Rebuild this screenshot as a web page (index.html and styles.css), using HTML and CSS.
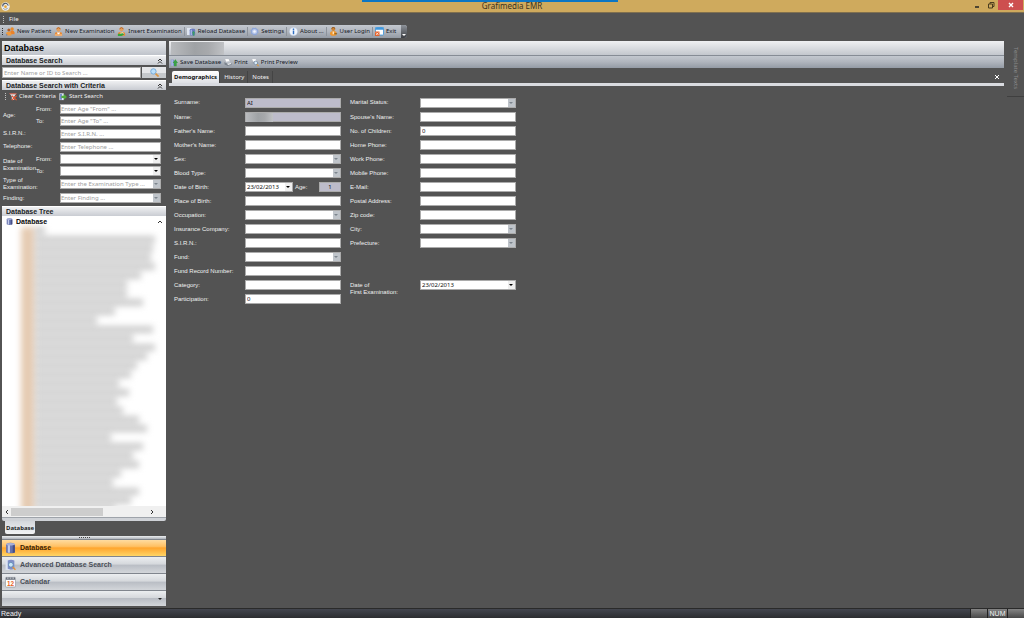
FILE: index.html
```html
<!DOCTYPE html>
<html lang="en">
<head>
	<meta charset="utf-8">
	<title>Grafimedia EMR</title>
	<link rel="stylesheet" href="styles.css">
</head>
<body>
	<!-- Icon sprite -->
	<svg class="sprite" aria-hidden="true">
		<symbol id="i-app" viewBox="0 0 10 10"><circle cx="5" cy="5" r="4.7" fill="#eef0f2"/><path d="M2 5a3 3 0 0 1 6-1" fill="none" stroke="#4d5560" stroke-width="1.2"/><path d="M2.5 7a3 3 0 0 0 5-.5" fill="none" stroke="#8d949c"/><circle cx="5" cy="5.2" r="1.5" fill="#e8a431"/></symbol>
		<symbol id="i-patients" viewBox="0 0 10 10"><circle cx="6.8" cy="2.3" r="1.9" fill="#e88a2a"/><path d="M4.5 8V6q0-2 2.3-2T9.5 6v2z" fill="#e9822b"/><circle cx="3.2" cy="3.4" r="1.7" fill="#b2602a"/><path d="M0 9.5V7.500q0-2.200 3-2.200t3 2.200v2z" fill="#f09a3a"/><path d="M0 8h1.500v1.500H0z" fill="#6482c8"/></symbol>
		<symbol id="i-exam" viewBox="0 0 10 10"><circle cx="5" cy="2.700" r="2.300" fill="#e3a05d"/><path d="M2.800 2q2-2.500 4.400 0" stroke="#b05c1e" fill="none"/><path d="M1 9.700V8q0-2.700 4-2.700T9 8v1.700z" fill="#e98a34"/><path d="M3 6l2 3 2-3z" fill="#fff"/><path d="M1 8h8v1.700H1z" fill="#f3b77c"/></symbol>
		<symbol id="i-insert" viewBox="0 0 10 10"><circle cx="5" cy="2.500" r="2.200" fill="#e3a05d"/><path d="M2.800 2q2-2.500 4.400 0" stroke="#b05c1e" fill="none"/><path d="M1 9.700V8q0-2.700 4-2.700T9 8v1.700z" fill="#e98a34"/><path d="M4 6h3v2H4z" fill="#fff"/><path d="M1 7.500h4V6.200L8 8.200 5 10H1z" fill="#35a63c"/></symbol>
		<symbol id="i-reload" viewBox="0 0 10 10"><path d="M0 1h5v8H0z" fill="#dfe6f1"/><rect x="3" y="2" width="6" height="7.500" rx="1.500" fill="#6a7cc0"/><path d="M4 3h1.500v6H4z" fill="#a9b9e6"/><path d="M6.500 9.700V7H5.300l2-2.800 2 2.800H8.200v2.700z" fill="#3d9b6a"/></symbol>
		<symbol id="i-gear" viewBox="0 0 10 10"><circle cx="5" cy="5" r="3.800" fill="#8ea6d8" stroke="#8ea6d8" stroke-width="1.600" stroke-dasharray="1.500 1.480"/><circle cx="5" cy="5" r="2.800" fill="#b9c8ea"/><circle cx="5" cy="5" r="1.400" fill="#eff3fb"/></symbol>
		<symbol id="i-info" viewBox="0 0 10 10"><circle cx="5" cy="5" r="4.600" fill="#f3f7fc" stroke="#a5b8d6" stroke-width=".5"/><path d="M4.200 1.800h1.600v1.500H4.200zM4.200 4h1.600v4H4.200z" fill="#2f6fc4"/></symbol>
		<symbol id="i-login" viewBox="0 0 10 10"><circle cx="4.800" cy="2.300" r="2.200" fill="#d08534"/><path d="M2.800 1.600q2-2.500 4 0" stroke="#7b4a1e" fill="none"/><path d="M1 8q0-3.500 4-3.500T8.500 8L7 9.800H3z" fill="#f0962c"/><path d="M4 5h1.600v3H4z" fill="#fbe3bd"/><path d="M6 7h3v1H6z" fill="#7a5a22"/></symbol>
		<symbol id="i-exit" viewBox="0 0 10 10"><rect x=".5" y=".5" width="9" height="8.500" rx="1" fill="#fff" stroke="#3f97dc"/><path d="M.500.500h9V3h-9z" fill="#3f97dc"/><path d="M0 5h5v5H0z" fill="#e5632b"/><path d="M1.200 6.200l2.600 2.600M3.800 6.200L1.200 8.800" stroke="#fff" stroke-width=".8"/></symbol>
		<symbol id="i-save" viewBox="0 0 10 10"><path d="M1 1.500h4v7.500H1z" fill="#7f93cd"/><path d="M2 2h1.200v7H2z" fill="#ccd6f0"/><path d="M5 9.700V5.500H3.400L6.700 1 10 5.500H8.300v4.200z" fill="#3aa047"/></symbol>
		<symbol id="i-print" viewBox="0 0 10 10"><path d="M1.500.500L6 1l1 3-4 1z" fill="#fff"/><path d="M.500 4.500L6 3.500l3.500 2v2.500L4.500 9.500l-4-2z" fill="#b9bfc7"/><path d="M.500 4.500l4 2 5-1v2.500l-5 1.500-4-2z" fill="#7b838d"/><path d="M4 6.500l4.500-1L9 7l-4 1.200z" fill="#eef0f3"/></symbol>
		<symbol id="i-preview" viewBox="0 0 10 10"><path d="M1.500.500L6 1l1 3-4 1z" fill="#fff"/><path d="M.500 4.500L6 3.500l3.500 2v2L4.500 9.500l-4-2z" fill="#a3aab4"/><circle cx="6" cy="5.500" r="2.300" fill="#d9ebf8" stroke="#75879d"/><path d="M7.500 7.300L9.500 9.500" stroke="#e39a35" stroke-width="1.300"/></symbol>
		<symbol id="i-lens" viewBox="0 0 10 10"><circle cx="3.800" cy="3.800" r="3" fill="#b9defa" stroke="#6ea5d6"/><path d="M6.200 6.200L9.500 9.500" stroke="#d99442" stroke-width="1.800"/></symbol>
		<symbol id="i-clear" viewBox="0 0 10 10"><path d="M.500 1h9L6.500 5v4.500h-3V5z" fill="#e3e6ea"/><path d="M.500 1h9v1.200h-9z" fill="#b33c26"/><path d="M3.500 4l6 5.500M9.500 4l-6 5.500" stroke="#e2532f" stroke-width="1.500"/></symbol>
		<symbol id="i-start" viewBox="0 0 10 10"><path d="M.500 1h5.500v8.500H.500z" fill="#dfe6f5"/><path d="M1.500 2h2v7h-2z" fill="#5e77bd"/><path d="M3 4h3V1.800L10 5.500 6 9V7H3z" fill="#53ae3c"/></symbol>
		<symbol id="i-db" viewBox="0 0 10 10"><path d="M1 1.500q4-2.500 8 0v7.500q-4 1.700-8 0z" fill="#6672ad"/><path d="M2.500 1.800h2v7.500h-2z" fill="#c3cbea"/><ellipse cx="5" cy="1.600" rx="4" ry="1.200" fill="#a6afd7"/><path d="M7 2.500h2v6.500l-2 .600z" fill="#474f86"/></symbol>
		<symbol id="i-dbsearch" viewBox="0 0 10 10"><path d="M.500.500h4v9h-4z" fill="#dce3f1"/><path d="M2.500 1q3-1.500 6 0v7.500q-3 1.300-6 0z" fill="#7f8fc6"/><circle cx="5.300" cy="4.800" r="2.200" fill="#c9e6f6" stroke="#5e86b4" stroke-width=".8"/><path d="M7 6.800L9.500 9.300" stroke="#e2953a" stroke-width="1.300"/></symbol>
	</svg>

	<header class="titlebar">
		<svg class="icon"><use href="#i-app"/></svg>
		<h1>Grafimedia EMR</h1>
		<span class="accent"></span>
		<div class="winbtns">
			<button class="win" aria-label="Minimize"><svg viewBox="0 0 8 8"><path d="M2 6h4" stroke="#222" stroke-width="1.500"/></svg></button>
			<button class="win" aria-label="Restore"><svg viewBox="0 0 8 8"><path d="M1.500 3h4v4h-4zM3 3V1.500h4v4H5.500" fill="none" stroke="#4b3d1e"/></svg></button>
			<button class="win win-close" aria-label="Close"><svg viewBox="0 0 8 8"><path d="M2 2l4 4M6 2L2 6" stroke="#fff" stroke-width="1.400"/></svg></button>
		</div>
	</header>

	<nav class="menubar"><span class="grip"></span><button class="menu">File</button></nav>

	<div class="toolbar main-toolbar">
		<span class="grip dark"></span>
		<button class="tool"><svg class="icon"><use href="#i-patients"/></svg>New Patient</button>
		<button class="tool"><svg class="icon"><use href="#i-exam"/></svg>New Examination</button>
		<button class="tool"><svg class="icon"><use href="#i-insert"/></svg>Insert Examination</button>
		<span class="sep"></span>
		<button class="tool"><svg class="icon"><use href="#i-reload"/></svg>Reload Database</button>
		<span class="sep"></span>
		<button class="tool"><svg class="icon"><use href="#i-gear"/></svg>Settings</button>
		<span class="sep"></span>
		<button class="tool"><svg class="icon"><use href="#i-info"/></svg>About ...</button>
		<span class="sep"></span>
		<button class="tool"><svg class="icon"><use href="#i-login"/></svg>User Login</button>
		<span class="sep"></span>
		<button class="tool"><svg class="icon"><use href="#i-exit"/></svg>Exit</button>
		<button class="overflow" aria-label="Toolbar options"></button>
	</div>

	<div class="workspace">
		<aside class="sidebar">
			<h2 class="pane-title">Database</h2>
			<h3 class="section">Database Search <svg viewBox="0 0 6 6"><path d="M1 3l2-2 2 2M1 5.500l2-2 2 2"/></svg></h3>
			<div class="quick">
				<input type="text" aria-label="Search" placeholder="Enter Name or ID to Search ...">
				<button aria-label="Search"><svg class="icon"><use href="#i-lens"/></svg></button>
			</div>
			<h3 class="section">Database Search with Criteria <svg viewBox="0 0 6 6"><path d="M1 3l2-2 2 2M1 5.500l2-2 2 2"/></svg></h3>
			<div class="criteria-tools">
				<span class="grip"></span>
				<button class="tool light"><svg class="icon"><use href="#i-clear"/></svg>Clear Criteria</button>
				<button class="tool light"><svg class="icon"><use href="#i-start"/></svg>Start Search</button>
			</div>
			<div class="criteria">
				<span class="pair">Age:</span>
				<label for="age-from">From:</label><input type="text" id="age-from" placeholder="Enter Age &quot;From&quot; ...">
				<label for="age-to">To:</label><input type="text" id="age-to" placeholder="Enter Age &quot;To&quot; ...">
				<label class="wide" for="c-sirn">S.I.R.N.:</label><input type="text" id="c-sirn" placeholder="Enter S.I.R.N. ...">
				<label class="wide" for="c-tel">Telephone:</label><input type="text" id="c-tel" placeholder="Enter Telephone ...">
				<span class="pair">Date of<br>Examination</span>
				<label for="d-from">From:</label><span class="combo date"><select id="d-from"><option></option></select></span>
				<label for="d-to">To:</label><span class="combo date"><select id="d-to"><option></option></select></span>
				<label class="wide" for="c-type">Type of<br>Examination:</label><span class="combo hint"><select id="c-type"><option>Enter the Examination Type ...</option></select></span>
				<label class="wide" for="c-find">Finding:</label><span class="combo hint"><select id="c-find"><option>Enter Finding ...</option></select></span>
			</div>
			<h3 class="section">Database Tree</h3>
			<div class="tree">
				<div class="root"><svg class="icon"><use href="#i-db"/></svg>Database<svg class="up" viewBox="0 0 6 6"><path d="M1 4l2-2 2 2"/></svg></div>
				<div class="records" id="records"></div>
			</div>
			<div class="hscroll">
				<svg viewBox="0 0 6 6"><path d="M4 1L2 3l2 2"/></svg>
				<span class="track"><span class="thumb"></span></span>
				<svg viewBox="0 0 6 6"><path d="M2 1l2 2-2 2"/></svg>
			</div>
			<div class="foot"></div>
			<button class="pane-tab">Database</button>
			<div class="nav">
				<div class="splitter"></div>
				<button class="nav-item active"><svg class="icon"><use href="#i-db"/></svg>Database</button>
				<button class="nav-item"><svg class="icon"><use href="#i-dbsearch"/></svg>Advanced Database Search</button>
				<button class="nav-item"><svg class="icon" viewBox="0 0 12 12"><rect x=".5" y="1" width="11" height="10.500" rx="1" fill="#fff" stroke="#8b9098" stroke-width=".7"/><path d="M1 1h10v2.500H1z" fill="#5d6470"/><path d="M2 1.800h2M5 1.800h2M8 1.800h2" stroke="#fff" stroke-width=".8"/><text x="6" y="10" class="cal-day">12</text></svg>Calendar</button>
				<div class="nav-item nav-more"><button aria-label="Configure buttons"></button></div>
			</div>
		</aside>

		<main class="document">
			<div class="doc-title"><span class="masked"></span></div>
			<div class="toolbar doc-toolbar">
				<button class="tool"><svg class="icon"><use href="#i-save"/></svg>Save Database</button>
				<button class="tool"><svg class="icon"><use href="#i-print"/></svg>Print</button>
				<button class="tool"><svg class="icon"><use href="#i-preview"/></svg>Print Preview</button>
			</div>
			<div class="tabs">
				<button class="tab active">Demographics</button>
				<button class="tab">History</button>
				<button class="tab">Notes</button>
				<button class="tab-close" aria-label="Close tab"><svg viewBox="0 0 6 6"><path d="M1 1l4 4M5 1L1 5"/></svg></button>
			</div>
			<form class="details">
				<label for="surname">Surname:</label><input type="text" id="surname" class="locked" value="AI" readonly>
				<label for="marital">Marital Status:</label><span class="combo"><select id="marital"><option></option></select></span>

				<label for="name">Name:</label><span class="private"><input type="text" id="name" class="locked" readonly><span class="masked"></span></span>
				<label for="spouse">Spouse's Name:</label><input type="text" id="spouse">

				<label for="father">Father's Name:</label><input type="text" id="father">
				<label for="children">No. of Children:</label><input type="text" id="children" value="0">

				<label for="mother">Mother's Name:</label><input type="text" id="mother">
				<label for="home">Home Phone:</label><input type="text" id="home">

				<label for="sex">Sex:</label><span class="combo"><select id="sex"><option></option></select></span>
				<label for="work">Work Phone:</label><input type="text" id="work">

				<label for="blood">Blood Type:</label><span class="combo"><select id="blood"><option></option></select></span>
				<label for="mobile">Mobile Phone:</label><input type="text" id="mobile">

				<label for="birth">Date of Birth:</label>
				<div class="birth">
					<span class="combo date"><select id="birth"><option>23/02/2013</option></select></span>
					<label for="age">Age:</label><input type="text" id="age" class="locked" value="1" readonly>
				</div>
				<label for="email">E-Mail:</label><input type="text" id="email">

				<label for="place">Place of Birth:</label><input type="text" id="place">
				<label for="postal">Postal Address:</label><input type="text" id="postal">

				<label for="job">Occupation:</label><span class="combo"><select id="job"><option></option></select></span>
				<label for="zip">Zip code:</label><input type="text" id="zip">

				<label for="insurance">Insurance Company:</label><input type="text" id="insurance">
				<label for="city">City:</label><span class="combo"><select id="city"><option></option></select></span>

				<label for="sirn">S.I.R.N.:</label><input type="text" id="sirn">
				<label for="prefecture">Prefecture:</label><span class="combo"><select id="prefecture"><option></option></select></span>

				<label class="first" for="fund">Fund:</label><span class="combo"><select id="fund"><option></option></select></span>
				<label class="first" for="record">Fund Record Number:</label><input type="text" id="record">
				<label class="first" for="category">Category:</label><input type="text" id="category">
				<label class="two-line" for="first-exam">Date of<br>First Examination:</label><span class="combo date"><select id="first-exam"><option>23/02/2013</option></select></span>
				<label class="first" for="part">Participation:</label><input type="text" id="part" value="0">
			</form>
		</main>

		<div class="dock"><button>Template Texts</button></div>
	</div>

	<footer class="status"><span class="ready">Ready</span><span class="cell"></span><span class="cell num">NUM</span><span class="cell"></span></footer>

	<script>
		// patient names stay blurred, only their lengths show
		const lengths = [10, 120, 118, 116, 120, 106, 92, 92, 108, 80, 62, 118, 98, 120, 112, 102, 96, 84, 94, 82, 88, 104, 112, 76, 108, 98, 104, 86, 78, 104, 96, 80, 110];
		const records = document.querySelector('#records');

		lengths.forEach((length) => {
			const row = document.createElement('div');
			row.className = 'record';
			row.innerHTML = '<i></i><b style="width: ' + length + 'px"></b>';
			records.appendChild(row);
		});
	</script>
</body>
</html>
```
FILE: styles.css
```css
* {
	box-sizing: border-box;
}
body {
	margin: 0;
	height: 100vh;
	display: flex;
	flex-direction: column;
	overflow: hidden;
	background: #535353;
	color: #f0f0f0;
	font-family: "Noto Sans", "Open Sans", sans-serif;
	font-size: 6px;
	line-height: 7px;
}
button, input, select {
	font: inherit;
	color: inherit;
	margin: 0;
	padding: 0;
	border: 0;
	background: none;
	border-radius: 0;
}
h1, h2, h3 {
	margin: 0;
	font-size: inherit;
}
svg {
	display: block;
	flex: none;
}
.sprite {
	position: absolute;
	width: 0;
	height: 0;
}
.icon {
	width: 9px;
	height: 9px;
}
.cal-day {
	font: bold 7px "Liberation Sans", sans-serif;
	fill: #e8601c;
	text-anchor: middle;
}

/* Title bar */
.titlebar {
	position: relative;
	display: flex;
	align-items: center;
	height: 13px;
	padding-left: 1px;
	background: #cfaa5d;
	border-bottom: 1px solid #80704f;
}
.titlebar h1 {
	flex: 1;
	text-align: center;
	color: #3b3220;
	font-size: 8px;
	font-weight: normal;
	line-height: 12px;
	padding-left: 44px;
}
.accent {
	position: absolute;
	top: 0;
	left: 362px;
	width: 25%;
	height: 2px;
	background: #0c76c4;
}
.winbtns {
	display: flex;
	align-self: flex-start;
	padding-right: 1px;
}
.win {
	width: 14px;
	height: 10px;
	display: grid;
	place-items: center;
}
.win svg {
	width: 8px;
	height: 8px;
}
.win-close {
	width: 25px;
	background: #cd4f4f;
}

/* Menu and toolbars */
.menubar {
	display: flex;
	align-items: center;
	height: 12px;
	padding: 0 3px;
	gap: 5px;
}
.grip {
	width: 1px;
	height: 7px;
	background: repeating-linear-gradient(#c0c0c0 0 1px, transparent 1px 2px);
}
.grip.dark {
	background: repeating-linear-gradient(#333 0 1px, transparent 1px 2px);
}
.toolbar {
	display: flex;
	align-items: center;
	height: 13px;
	background: linear-gradient(#c3c8cf, #b0b5bd 50%, #949ba5);
	color: #14171e;
}
.main-toolbar {
	align-self: flex-start;
	padding-left: 2px;
	gap: 3px;
	border-radius: 0 3px 3px 0;
	overflow: hidden;
}
.tool {
	display: flex;
	align-items: center;
	gap: 2px;
	white-space: nowrap;
}
.light {
	color: #f0f0f0;
}
.sep {
	width: 1px;
	height: 9px;
	margin: 0 -1px;
	background: #8c929a;
}
.overflow {
	width: 6px;
	align-self: stretch;
	margin-left: 2px;
	background: linear-gradient(#8d9299, #3c3f44);
	position: relative;
}
.overflow::after {
	content: "";
	position: absolute;
	left: 1px;
	bottom: 2px;
	border: 2px solid transparent;
	border-top-color: #fff;
	border-bottom: 0;
}

/* Workspace */
.workspace {
	flex: 1;
	min-height: 0;
	display: flex;
	gap: 3px;
	padding: 3px 0 2px 2px;
}
.sidebar {
	width: 164px;
	display: flex;
	flex-direction: column;
}
.pane-title {
	height: 14px;
	padding-left: 2px;
	background: linear-gradient(#e9ebee, #bfc3ca);
	color: #000;
	font: bold 9px/14px "Liberation Sans", sans-serif;
}
.section {
	display: flex;
	justify-content: space-between;
	align-items: center;
	height: 10px;
	padding: 0 3px 0 4px;
	background: linear-gradient(#eff0f2, #c9ccd2);
	border-top: 1px solid #fff;
	color: #1b1e26;
	font: bold 7px/9px "Liberation Sans", sans-serif;
}
.section svg, .up, .hscroll svg {
	width: 6px;
	height: 6px;
	fill: none;
	stroke: #333;
}
.quick {
	display: flex;
	height: 15px;
	padding: 2px 0;
	gap: 1px;
}
.quick input {
	flex: 1;
	min-width: 0;
	height: 11px;
}
.quick button {
	width: 24px;
	display: grid;
	place-items: center;
	background: linear-gradient(#e5e6e8 50%, #c5c8cb 50%);
}
input, select {
	background: #fff;
	color: #111;
	border: 1px solid #ababab;
	padding: 0 1px;
	height: 10px;
	line-height: 8px;
	width: 100%;
}
input:focus, select:focus {
	outline: 1px solid #e2a24a;
}
input::placeholder {
	color: #a0a0a0;
	opacity: 1;
}
.criteria-tools {
	display: flex;
	align-items: center;
	height: 13px;
	padding-left: 3px;
	gap: 3px;
}
.criteria-tools .icon, .doc-toolbar .icon {
	width: 8px;
}
.criteria {
	display: grid;
	grid-template-columns: 34px 24px 1fr;
	grid-template-rows: 12px 12px 13px 13px 12px 12px 14px 14px;
	align-items: center;
	padding: 0 5px 1px 0;
}
.criteria input, .criteria select {
	padding: 0;
}
.criteria label, .pair, .details label {
	font-family: "Liberation Sans", sans-serif;
}
.pair {
	grid-row: span 2;
}
.pair, .wide {
	padding-left: 1px;
}
.wide {
	grid-column: span 2;
}

/* Drop-downs with their own arrow */
.combo {
	position: relative;
	display: block;
	min-width: 0;
}
.combo select {
	appearance: none;
	display: block;
}
.combo::before {
	content: "";
	position: absolute;
	top: 1px;
	right: 1px;
	bottom: 1px;
	width: 7px;
	background: #bfc4ca;
	pointer-events: none;
}
.combo::after {
	content: "";
	position: absolute;
	top: 4px;
	right: 3px;
	border: 2px solid transparent;
	border-top-color: #7d858e;
	border-bottom: 0;
	pointer-events: none;
}
.combo.date::before {
	background: #eee;
}
.combo.date::after {
	border-top-color: #000;
}
.hint select {
	color: #a0a0a0;
}

/* Tree */
.tree {
	flex: 1;
	min-height: 0;
	background: #fff;
	overflow: hidden;
}
.root {
	display: flex;
	align-items: center;
	height: 11px;
	padding: 0 3px 0 4px;
	gap: 3px;
	color: #000;
	font: bold 7px/9px "Liberation Sans", sans-serif;
}
.root .icon {
	width: 7px;
	height: 7px;
}
.up {
	margin-left: auto;
}
.records {
	padding-left: 19px;
	filter: blur(3px);
}
.record {
	display: flex;
	height: 9px;
	gap: 1px;
}
.record i {
	width: 13px;
	background: #e5cbb2;
}
.record b {
	height: 7px;
	background: #cdcdcd;
}
.hscroll {
	display: flex;
	align-items: center;
	height: 11px;
	padding: 0 11px 0 2px;
	gap: 1px;
	background: #f0f0f0;
}
.track {
	flex: 1;
}
.thumb {
	display: block;
	width: 67%;
	height: 8px;
	background: #cdcdcd;
}
.foot {
	height: 4px;
	background: #cfd2d7;
	border-top: 1px solid #9ea3aa;
	border-radius: 0 0 2px 2px;
}
.pane-tab {
	align-self: flex-start;
	height: 13px;
	margin-left: 3px;
	padding: 0 1px;
	background: linear-gradient(#d4d7dc, #f2f3f4);
	color: #1b1e26;
	font: bold 6px/12px "Noto Sans", sans-serif;
	border-radius: 0 0 2px 2px;
}
.nav {
	margin-top: 2px;
}
.splitter {
	height: 3px;
	background: linear-gradient(#eceef0, #aeb3ba);
	display: grid;
	place-items: center;
}
.splitter::after {
	content: "";
	width: 11px;
	height: 1px;
	background: repeating-linear-gradient(90deg, #444 0 1px, transparent 1px 2px);
}
.nav-item {
	display: flex;
	align-items: center;
	width: 100%;
	height: 17px;
	padding-left: 3px;
	gap: 4px;
	border-top: 1px solid #80858d;
	background: linear-gradient(#eceef0, #d5d8dc 45%, #b9bdc4 50%, #d3d6da);
	color: #4a4f58;
	font: bold 7px/10px "Liberation Sans", sans-serif;
}
.nav-item .icon {
	width: 11px;
	height: 12px;
}
.nav-item.active {
	background: linear-gradient(#ffdca0, #ffc063 40%, #ffa52e 50%, #ffd566);
	color: #3a2305;
}
.nav-more {
	height: 16px;
	justify-content: flex-end;
	padding-right: 4px;
}
.nav-more button {
	border: 2px solid transparent;
	border-top-color: #222;
	border-bottom: 0;
}

/* Document */
.document {
	flex: 1;
	min-width: 0;
}
.doc-title {
	height: 15px;
	padding: 1px 2px;
	background: linear-gradient(#eff0f2, #c3c7cd);
	border-bottom: 1px solid #868c95;
}
.masked {
	display: block;
	background: linear-gradient(90deg, #b9bbbe, #9fa2a5 45%, #a7a9ac 70%, #c0c2c5);
}
.doc-title .masked {
	width: 53px;
	height: 13px;
}
.doc-toolbar {
	height: 12px;
	padding-left: 1px;
	gap: 3px;
}
.tabs {
	display: flex;
	align-items: flex-end;
	height: 18px;
	padding-left: 3px;
	border-bottom: 3px solid #d9dbe0;
}
.tab {
	height: 12px;
	padding: 0 4px;
	border-right: 1px solid #444;
}
.tab.active {
	padding: 0 2px;
	background: linear-gradient(#fff, #dfe1e5);
	color: #111;
	font-weight: bold;
	border-radius: 2px 2px 0 0;
}
.tab + .tab {
	padding: 0 3px 0 4px;
}
.tab-close {
	margin: 0 4px 3px auto;
}
.tab-close svg {
	width: 6px;
	height: 6px;
	stroke: #fff;
}
.details {
	display: grid;
	grid-template-columns: 71px 96px 79px 96px;
	grid-template-rows: 15px;
	grid-auto-rows: 14px;
	align-items: center;
	padding: 9px 0 0 5px;
}
.details > label:nth-of-type(even) {
	padding-left: 9px;
}
.details > label.first {
	grid-column: 1;
	padding-left: 0;
}
.details > label.two-line {
	padding-left: 9px;
	align-self: start;
	padding-top: 4px;
	height: 14px;
}
input.locked {
	background: #bdbccb;
}
.private {
	position: relative;
}
.private .masked {
	position: absolute;
	top: 1px;
	left: 1px;
	width: 27px;
	height: 9px;
}
.private input {
	display: block;
}
.birth {
	display: flex;
	align-items: center;
}
.birth .date {
	width: 48px;
	margin-right: 2px;
}
.birth input {
	width: 22px;
	margin-left: auto;
	text-align: center;
}

/* Right dock and status bar */
.dock {
	width: 17px;
	height: 56px;
	display: flex;
	justify-content: center;
	border-bottom: 1px solid #3f3f3f;
}
.dock button {
	writing-mode: vertical-rl;
	color: #8a8a8a;
}
.status {
	display: flex;
	height: 10px;
	background: linear-gradient(#43464f, #2c2d30);
	border-top: 1px solid #2a2a2a;
	font-family: "Liberation Sans", sans-serif;
	font-size: 7px;
	line-height: 9px;
}
.ready {
	flex: 1;
	padding-left: 1px;
}
.cell {
	width: 17px;
	border-left: 1px solid #222;
	background: linear-gradient(#858585, #484848);
}
.num {
	width: 20px;
	text-align: center;
}
```
